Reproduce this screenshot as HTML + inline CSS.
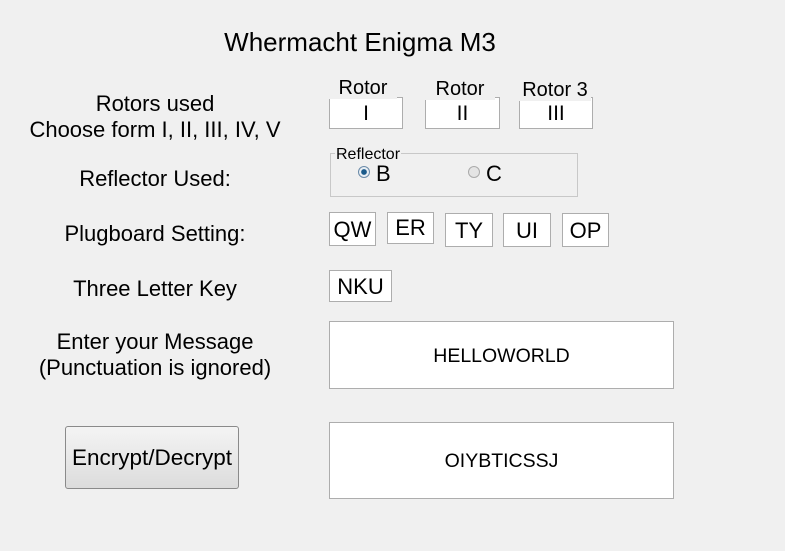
<!DOCTYPE html>
<html><head><style>
body{margin:0;width:785px;height:551px;background:#f0f0f0;font-family:"Liberation Sans",Arial,sans-serif;position:relative;overflow:hidden;color:#000}
.a{position:absolute}
.t{position:absolute;text-align:center;font-size:22px;line-height:26px;white-space:nowrap}
.box{position:absolute;background:#fff;border:1px solid #adadad;box-sizing:border-box;text-align:center;font-size:21px}
</style></head><body>
<div class="t" style="left:160px;width:400px;top:28px;font-size:26px;line-height:28px">Whermacht Enigma M3</div>
<div class="t" style="left:0;width:310px;top:91px">Rotors used<br>Choose form I, II, III, IV, V</div>
<div class="t" style="left:0;width:310px;top:166px">Reflector Used:</div>
<div class="t" style="left:0;width:310px;top:221px">Plugboard Setting:</div>
<div class="t" style="left:0;width:310px;top:276px">Three Letter Key</div>
<div class="t" style="left:0;width:310px;top:329px">Enter your Message<br>(Punctuation is ignored)</div>

<div class="box" style="left:329px;top:97px;width:74px;height:32px;line-height:32px">I</div>
<div class="box" style="left:425px;top:97px;width:75px;height:32px;line-height:32px">II</div>
<div class="box" style="left:519px;top:97px;width:74px;height:32px;line-height:32px">III</div>
<div class="t" style="left:329px;width:68px;top:77px;font-size:20px;background:#f0f0f0;line-height:22px">Rotor</div>
<div class="t" style="left:425px;width:70px;top:78px;font-size:20px;background:#f0f0f0;line-height:22px">Rotor</div>
<div class="t" style="left:519px;width:72px;top:79px;font-size:20px;background:#f0f0f0;line-height:22px">Rotor 3</div>

<div class="a" style="left:330px;top:153px;width:246px;height:42px;border:1px solid #c8c8c8"></div>
<div class="a" style="left:335px;top:146px;font-size:16px;background:#f0f0f0;padding:0 1px">Reflector</div>
<div class="a" style="left:358px;top:166px;width:12px;height:12px;border-radius:50%;border:1px solid #6a8aa8;background:radial-gradient(circle,#1a5a8a 0 35%,#e8eef4 45%);box-sizing:border-box"></div>
<div class="a" style="left:376px;top:161px;font-size:22px">B</div>
<div class="a" style="left:468px;top:166px;width:12px;height:12px;border-radius:50%;border:1px solid #aaa;background:#e4e4e4;box-sizing:border-box"></div>
<div class="a" style="left:486px;top:161px;font-size:22px">C</div>

<div class="box" style="left:329px;top:212px;width:47px;height:34px;line-height:34px;font-size:22px">QW</div>
<div class="box" style="left:387px;top:212px;width:47px;height:32px;line-height:30px;font-size:22px">ER</div>
<div class="box" style="left:445px;top:213px;width:48px;height:34px;line-height:34px;font-size:22px">TY</div>
<div class="box" style="left:503px;top:213px;width:48px;height:34px;line-height:34px;font-size:22px">UI</div>
<div class="box" style="left:562px;top:213px;width:47px;height:34px;line-height:34px;font-size:22px">OP</div>
<div class="box" style="left:329px;top:270px;width:63px;height:32px;line-height:32px;font-size:22px">NKU</div>

<div class="box" style="left:329px;top:321px;width:345px;height:68px;line-height:68px;font-size:19.5px">HELLOWORLD</div>
<div class="box" style="left:329px;top:422px;width:345px;height:77px;line-height:77px;font-size:19.5px">OIYBTICSSJ</div>

<div class="a" style="left:65px;top:426px;width:174px;height:63px;box-sizing:border-box;border:1px solid #8a8a8a;border-radius:3px;background:linear-gradient(#f4f4f4,#dcdcdc);text-align:center;line-height:61px;font-size:22.5px;white-space:nowrap">Encrypt/Decrypt</div>
</body></html>
